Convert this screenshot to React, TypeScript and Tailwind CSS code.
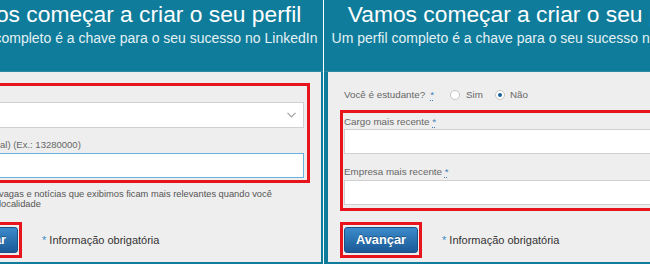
import React from "react";

const FONT = "font-['Liberation_Sans',Arial,Helvetica,sans-serif]";

function Req() {
  return (
    <span className="text-[#3b7fb6] underline decoration-dotted underline-offset-2">*</span>
  );
}

function Header() {
  return (
    <div className="h-[72px] flex flex-col items-center text-white border-b border-[#2f8aa3]">
      <div className="pt-[1px] text-[22.8px] leading-[27px] whitespace-nowrap">
        Vamos começar a criar o seu perfil
      </div>
      <div className="mt-[2px] text-[14px] leading-[16px] whitespace-nowrap text-[#e3f1f5]">
        Um perfil completo é a chave para o seu sucesso no LinkedIn
      </div>
    </div>
  );
}

function ButtonRow({ cls }: { cls: string }) {
  return (
    <div className={`flex items-center ${cls}`}>
      <div className="border-[3px] border-[#e8141c] px-[1px] py-[2px]">
        <button className="w-[74px] h-[26px] rounded-[3px] border border-[#1c4f82] bg-linear-to-b from-[#3b8bcc] to-[#1b5a96] text-white font-bold text-[12.8px] leading-none [text-shadow:0_-1px_0_rgba(0,0,0,0.35)]">
          Avançar
        </button>
      </div>
      <div className="ml-[20px] text-[11px] leading-[14px] text-[#333] whitespace-nowrap">
        <span className="text-[#3a8fc4]">*</span> Informação obrigatória
      </div>
    </div>
  );
}

function Page({ children, cls }: { children: React.ReactNode; cls: string }) {
  return (
    <div className={`w-[398px] h-[264px] shrink-0 bg-[#0e7c9a] flex flex-col ${cls}`}>
      <Header />
      <div className="mx-[4px] h-[190px] bg-[#eeeeee] flex flex-col">{children}</div>
    </div>
  );
}

function LeftBody() {
  return (
    <div className="pt-[11px] flex flex-col">
      <div className="ml-[12px] w-[367px] border-[3px] border-[#e8141c] pt-[3px] pb-[2px] pl-[1px] pr-[3px] flex flex-col">
        <div className="h-[12px]" />
        <div className="mt-[1px] h-[26px] bg-white border border-[#d0d0d0] flex items-center justify-end pr-[7px]">
          <svg width="9" height="6" viewBox="0 0 9 6">
            <polyline points="0.5,0.8 4.5,4.8 8.5,0.8" fill="none" stroke="#a0a0a0" strokeWidth="1.2" />
          </svg>
        </div>
        <div className="mt-[11px] h-[12px] leading-[12px] text-[9.5px] text-[#666] pl-[53px] whitespace-nowrap">
          al) (Ex.: 13280000)
        </div>
        <div className="mt-[2px] h-[25px] bg-white border border-[#66b3de]" />
      </div>
      <div className="mt-[6px] ml-[68px] text-[9.3px] leading-[10px] text-[#555] whitespace-nowrap">
        vagas e notícias que exibimos ficam mais relevantes quando você
        <br />
        localidade
      </div>
      <ButtonRow cls="mt-[13px] ml-[9px]" />
    </div>
  );
}

function RightBody() {
  return (
    <div className="pt-[17px] flex flex-col">
      <div className="ml-[16px] h-[12px] flex items-center text-[9.8px] text-[#666] whitespace-nowrap">
        <span>Você é estudante?</span>
        <span className="ml-[5px]">
          <Req />
        </span>
        <span className="ml-[16px] w-[10px] h-[10px] rounded-full border border-[#c4c4c4] bg-white" />
        <span className="ml-[6px]">Sim</span>
        <span className="ml-[12px] w-[10px] h-[10px] rounded-full border border-[#c4c4c4] bg-white flex items-center justify-center">
          <span className="w-[4px] h-[4px] rounded-full bg-[#1a5f9e]" />
        </span>
        <span className="ml-[5px]">Não</span>
      </div>
      <div className="mt-[9px] ml-[12px] w-[367px] border-[3px] border-[#e8141c] pt-[3px] pb-[3px] pl-[1px] pr-[3px] flex flex-col">
        <div className="h-[12px] leading-[12px] text-[9.8px] text-[#666] whitespace-nowrap">
          Cargo mais recente <Req />
        </div>
        <div className="mt-[1px] h-[25px] bg-white border border-[#d0d0d0]" />
        <div className="mt-[12px] h-[12px] leading-[12px] text-[9.8px] text-[#666] whitespace-nowrap">
          Empresa mais recente <Req />
        </div>
        <div className="mt-[2px] h-[25px] bg-white border border-[#d0d0d0]" />
      </div>
      <ButtonRow cls="mt-[11px] ml-[12px]" />
    </div>
  );
}

export default function App() {
  return (
    <div className={`w-[650px] h-[265px] bg-white flex ${FONT}`}>
      <div className="w-[323px] h-[265px] overflow-hidden flex shrink-0">
        <Page cls="ml-[-73px]">
          <LeftBody />
        </Page>
      </div>
      <div className="w-[1px] shrink-0" />
      <div className="w-[326px] h-[265px] overflow-hidden flex shrink-0">
        <Page cls="">
          <RightBody />
        </Page>
      </div>
    </div>
  );
}
